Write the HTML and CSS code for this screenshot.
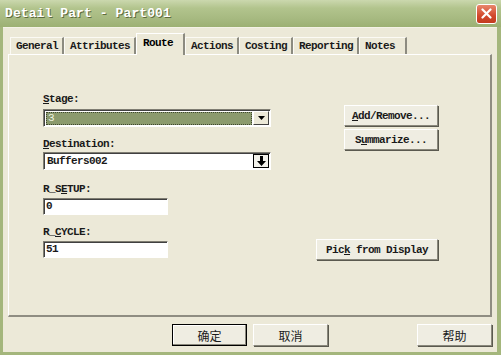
FILE: index.html
```html
<!DOCTYPE html>
<html lang="en">
<head>
    <meta charset="UTF-8">
    <title>Detail Part - Part001</title>
    <link rel="stylesheet" href="styles.css">
</head>
<body>
    <div class="window">
        <div class="titlebar">
            <span class="title">Detail Part - Part001</span>
            <button class="close-btn" aria-label="Close">
                <svg width="11" height="11" viewBox="0 0 11 11">
                    <path d="M1.5 1.5 L9.5 9.5 M9.5 1.5 L1.5 9.5" stroke="#fff" stroke-width="2.2" stroke-linecap="round"/>
                </svg>
            </button>
        </div>

        <div class="client">
            <div class="tabs">
                <div class="tab">General</div>
                <div class="tab">Attributes</div>
                <div class="tab active">Route</div>
                <div class="tab">Actions</div>
                <div class="tab">Costing</div>
                <div class="tab">Reporting</div>
                <div class="tab tab-last">Notes</div>
            </div>

            <div class="panel">
                <div class="left-col">
                    <div class="label label-first"><u>S</u>tage:</div>
                    <div class="combo combo-stage">
                        <div class="combo-value selected">3</div>
                        <div class="combo-btn">
                            <svg width="7" height="4" viewBox="0 0 7 4"><path d="M0 0 H7 L3.5 4 Z" fill="#000"/></svg>
                        </div>
                    </div>

                    <div class="label label-dest"><u>D</u>estination:</div>
                    <div class="combo">
                        <div class="combo-value">Buffers002</div>
                        <div class="combo-btn boxed">
                            <svg width="9" height="10" viewBox="0 0 9 10"><path d="M3 0 H6 V5 H9 L4.5 10 L0 5 H3 Z" fill="#000"/></svg>
                        </div>
                    </div>

                    <div class="label label-gap">R_S<u>E</u>TUP:</div>
                    <div class="textbox">0</div>

                    <div class="label label-gap2">R_<u>C</u>YCLE:</div>
                    <div class="textbox">51</div>
                </div>

                <div class="right-col">
                    <button class="btn btn-side"><u>A</u>dd/Remove...</button>
                    <button class="btn btn-side">S<u>u</u>mmarize...</button>
                    <button class="btn btn-pick">Pic<u>k</u> from Display</button>
                </div>
            </div>

            <div class="footer">
                <button class="btn btn-cjk btn-default">确定</button>
                <button class="btn btn-cjk">取消</button>
                <button class="btn btn-cjk btn-help">帮助</button>
            </div>
        </div>
    </div>
</body>
</html>
```

FILE: styles.css
```css
body {
    margin: 0;
    padding: 0;
    background-color: #ece9d8;
    font-family: 'Liberation Mono', monospace;
}

.window {
    width: 501px;
    height: 355px;
    display: flex;
    flex-direction: column;
    box-sizing: border-box;
    background-color: #a4b67c;
    overflow: hidden;
}

.titlebar {
    height: 27px;
    flex-shrink: 0;
    display: flex;
    align-items: center;
    justify-content: space-between;
    padding: 0 4px 0 5px;
    background: linear-gradient(180deg, #cbd8ae 0%, #b2c48d 30%, #a6b980 70%, #9cb073 100%);
}

.title {
    font-family: 'Liberation Mono', monospace;
    font-weight: bold;
    font-size: 13px;
    color: #fff;
    letter-spacing: 0.1px;
    text-shadow: 1px 1px 0 #5d6b3e;
}

.close-btn {
    width: 21px;
    height: 20px;
    padding: 0;
    display: flex;
    align-items: center;
    justify-content: center;
    border: 1px solid #fff;
    border-radius: 3px;
    background: linear-gradient(180deg, #e8876c, #d2482c 60%, #c33b20);
}

.client {
    flex: 1;
    display: flex;
    flex-direction: column;
    margin: 0 4px 3px 3px;
    padding: 5px 5px 0 5px;
    background-color: #ece9d8;
    border-top: 1px solid #f4f2e6;
}

.tabs {
    display: flex;
    align-items: flex-end;
    height: 21px;
    padding-left: 2px;
    position: relative;
    z-index: 1;
}

.tab {
    height: 17px;
    line-height: 17px;
    padding: 0 4px 0 5px;
    font-size: 11px;
    font-weight: bold;
    letter-spacing: -0.6px;
    color: #1a1a1a;
    border-right: 2px solid #8c8b80;
    border-left: 1px solid #fbfaf4;
    border-top: 1px solid #fbfaf4;
    box-sizing: border-box;
}

.tab.active {
    height: 22px;
    line-height: 18px;
    padding: 0 10px 0 6px;
    margin-bottom: -1px;
    background-color: #ece9d8;
    color: #000;
    border-top: 1px solid #fff;
    border-left: 1px solid #fff;
}

.tab-last {
    padding-right: 10px;
}

.panel {
    height: 263px;
    box-sizing: border-box;
    display: flex;
    border-top: 1px solid #fff;
    border-left: 1px solid #fff;
    border-right: 2px solid #8f8d82;
    border-bottom: 2px solid #8f8d82;
    padding: 38px 0 0 34px;
}

.left-col {
    width: 228px;
    display: flex;
    flex-direction: column;
}

.label {
    height: 12px;
    line-height: 12px;
    font-size: 11px;
    font-weight: bold;
    letter-spacing: -0.6px;
    color: #1a1a1a;
}

.label-first {
    margin-bottom: 4px;
}

.label-dest {
    margin-top: 11px;
    margin-bottom: 2px;
}

.label-gap {
    margin-top: 13px;
    margin-bottom: 3px;
}

.label-gap2 {
    margin-top: 11px;
    margin-bottom: 3px;
}

.combo {
    height: 18px;
    display: flex;
    box-sizing: border-box;
    border-top: 1px solid #7f7d72;
    border-left: 1px solid #7f7d72;
    border-right: 1px solid #fff;
    border-bottom: 1px solid #fff;
    background-color: #fff;
    box-shadow: inset 1px 1px 0 #404040;
}

.combo-value {
    flex: 1;
    font-size: 11px;
    font-weight: bold;
    letter-spacing: -0.6px;
    line-height: 15px;
    padding-left: 2px;
    margin: 1px 0 0 1px;
    color: #1a1a1a;
}

.combo-value.selected {
    background-color: #8b9a6d;
    color: #eef4e0;
    font-weight: normal;
    outline: 1px dotted #3e4630;
    outline-offset: -1px;
    margin: 2px 1px 1px 2px;
    line-height: 13px;
}

.combo-btn {
    width: 16px;
    display: flex;
    align-items: center;
    justify-content: center;
    margin: 1px 1px 1px 0;
    background-color: #ece9d8;
    border-top: 1px solid #fff;
    border-left: 1px solid #fff;
    border-right: 1px solid #404040;
    border-bottom: 1px solid #404040;
    box-sizing: border-box;
}

.combo-btn.boxed {
    border: 1px solid #000;
    background-color: #f2f1ea;
}

.textbox {
    width: 125px;
    height: 17px;
    box-sizing: border-box;
    background-color: #fff;
    border-top: 1px solid #7f7d72;
    border-left: 1px solid #7f7d72;
    border-right: 1px solid #fff;
    border-bottom: 1px solid #fff;
    box-shadow: inset 1px 1px 0 #404040;
    font-size: 11px;
    font-weight: bold;
    letter-spacing: -0.6px;
    line-height: 15px;
    padding-left: 2px;
    color: #1a1a1a;
}

.right-col {
    flex: 1;
    display: flex;
    flex-direction: column;
    align-items: flex-end;
    padding: 12px 52px 0 0;
}

.btn {
    font-family: 'Liberation Mono', monospace;
    font-size: 11px;
    font-weight: bold;
    letter-spacing: -0.6px;
    color: #1a1a1a;
    background-color: #efede2;
    border-top: 1px solid #fff;
    border-left: 1px solid #fff;
    border-right: 1px solid #8a887c;
    border-bottom: 1px solid #8a887c;
    box-shadow: 1px 1px 0 #5a594f;
    padding: 0;
    height: 21px;
    box-sizing: border-box;
}

.btn-side {
    width: 94px;
    margin-bottom: 3px;
}

.btn-pick {
    width: 122px;
    margin-top: 86px;
}

.footer {
    flex: 1;
    display: flex;
    align-items: flex-start;
    padding-top: 7px;
    padding-left: 164px;
}

.btn-cjk {
    font-family: 'Noto Sans CJK SC', sans-serif;
    font-weight: normal;
    letter-spacing: 0;
    font-size: 12px;
    width: 75px;
    height: 22px;
    margin-right: 6px;
}

.btn-default {
    border: 1px solid #000;
    box-shadow: inset -1px -1px 0 #8a887c, inset 1px 1px 0 #fff;
}

.btn-help {
    margin-left: auto;
    margin-right: 0;
}
```
